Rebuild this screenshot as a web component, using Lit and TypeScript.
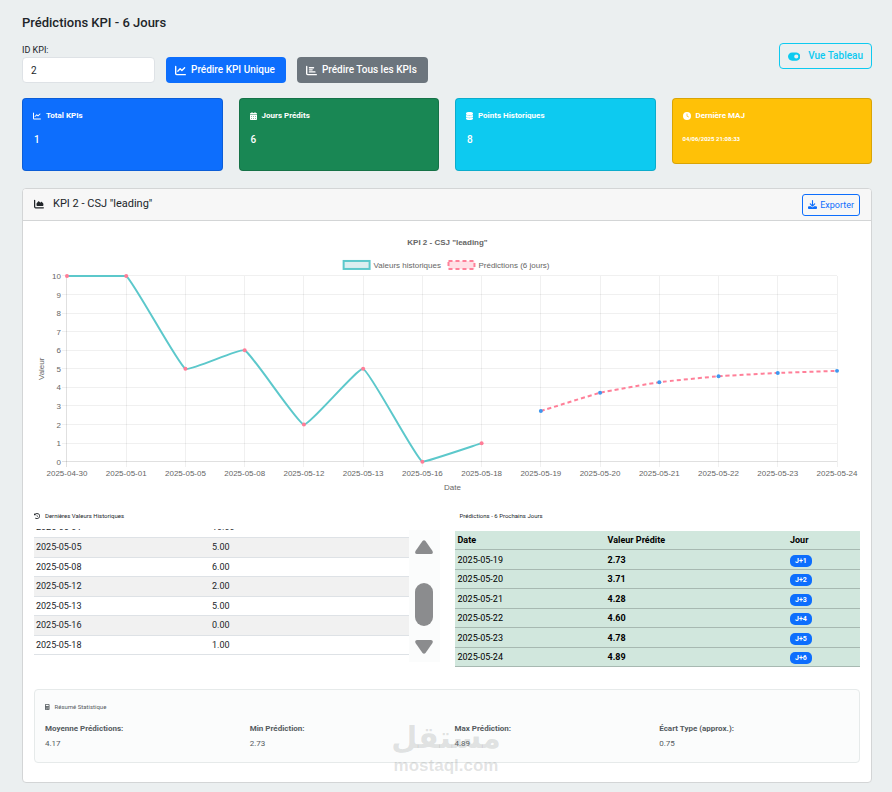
import { LitElement, html, css, svg } from "lit";
import { customElement, property } from "lit/decorators.js";

type Point = { x: number; y: number };

const ICONS: Record<string, { box: string; d: string }> = {
  line: {
    box: "0 0 512 512",
    d: "M64 64c0-17.700-14.300-32-32-32S0 46.300 0 64V400c0 44.200 35.800 80 80 80H480c17.700 0 32-14.300 32-32s-14.300-32-32-32H80c-8.800 0-16-7.200-16-16V64zm406.600 86.600c12.500-12.500 12.500-32.800 0-45.300s-32.800-12.500-45.300 0L320 210.700l-57.400-57.400c-12.500-12.500-32.800-12.500-45.300 0l-112 112c-12.500 12.500-12.500 32.800 0 45.300s32.800 12.500 45.300 0L240 221.300l57.400 57.400c12.500 12.500 32.800 12.500 45.300 0l128-128z",
  },
  bars: {
    box: "0 0 512 512",
    d: "M32 32c17.700 0 32 14.300 32 32V400c0 8.800 7.200 16 16 16H480c17.700 0 32 14.300 32 32s-14.300 32-32 32H80c-44.200 0-80-35.800-80-80V64C0 46.300 14.300 32 32 32zm96 96c0-17.700 14.300-32 32-32l192 0c17.700 0 32 14.300 32 32s-14.300 32-32 32l-192 0c-17.700 0-32-14.300-32-32zm32 64H288c17.700 0 32 14.300 32 32s-14.300 32-32 32H160c-17.700 0-32-14.300-32-32s14.300-32 32-32zm0 96H416c17.700 0 32 14.300 32 32s-14.300 32-32 32H160c-17.700 0-32-14.300-32-32s14.300-32 32-32z",
  },
  calendar: {
    box: "0 0 448 512",
    d: "M128 0c17.700 0 32 14.300 32 32V64H288V32c0-17.700 14.300-32 32-32s32 14.300 32 32V64h48c26.500 0 48 21.500 48 48v48H0V112C0 85.500 21.500 64 48 64H96V32c0-17.700 14.300-32 32-32zM0 192H448V464c0 26.500-21.500 48-48 48H48c-26.500 0-48-21.500-48-48V192zm64 64v32h64v-32H64zm128 0v32h64v-32h-64zm128 0v32h64v-32h-64zM64 392v32h64v-32H64zm128 0v32h64v-32h-64zm128 0v32h64v-32h-64z",
  },
  database: {
    box: "0 0 448 512",
    d: "M448 80v48c0 44.200-100.300 80-224 80S0 172.200 0 128V80C0 35.800 100.300 0 224 0S448 35.800 448 80zM393.200 214.700c20.800-7.400 39.900-16.900 54.800-28.600V288c0 44.200-100.300 80-224 80S0 332.200 0 288V186.100c14.900 11.800 34 21.200 54.800 28.600C99.700 230.700 159.500 240 224 240s124.300-9.300 169.200-25.300zM0 346.100c14.900 11.800 34 21.200 54.800 28.600C99.700 390.700 159.500 400 224 400s124.300-9.300 169.200-25.300c20.800-7.400 39.900-16.900 54.800-28.600V432c0 44.200-100.300 80-224 80S0 476.200 0 432V346.100z",
  },
  clock: {
    box: "0 0 512 512",
    d: "M256 0a256 256 0 1 1 0 512A256 256 0 1 1 256 0zM232 120V256c0 8 4 15.500 10.700 20l96 64c11 7.400 25.900 4.400 33.300-6.700s4.400-25.900-6.700-33.300L280 243.200V120c0-13.300-10.700-24-24-24s-24 10.700-24 24z",
  },
  toggle: {
    box: "0 0 576 512",
    d: "M192 64C86 64 0 150 0 256S86 448 192 448H384c106 0 192-86 192-192s-86-192-192-192H192zm192 96a96 96 0 1 1 0 192 96 96 0 1 1 0-192z",
  },
  area: {
    box: "0 0 512 512",
    d: "M64 64c0-17.700-14.300-32-32-32S0 46.300 0 64V400c0 44.200 35.800 80 80 80H480c17.700 0 32-14.300 32-32s-14.300-32-32-32H80c-8.800 0-16-7.200-16-16V64zm96 288H448c17.700 0 32-14.300 32-32V251.800c0-7.600-2.700-15-7.700-20.800l-65.800-76.800c-12.100-14.200-33.700-15-46.900-1.800l-21 21c-10 10-26.400 9.200-35.400-1.600l-39.200-47c-12.600-15.100-35.700-15.400-48.700-.6L135.900 215c-5.100 5.800-7.900 13.300-7.900 21.100v84c0 17.700 14.300 32 32 32z",
  },
  download: {
    box: "0 0 512 512",
    d: "M288 32c0-17.700-14.300-32-32-32s-32 14.300-32 32V274.700l-73.400-73.400c-12.500-12.500-32.800-12.500-45.300 0s-12.500 32.800 0 45.300l128 128c12.500 12.500 32.800 12.500 45.300 0l128-128c12.500-12.500 12.500-32.800 0-45.300s-32.800-12.500-45.300 0L288 274.700V32zM64 352c-35.300 0-64 28.700-64 64v32c0 35.300 28.700 64 64 64H448c35.300 0 64-28.700 64-64V416c0-35.300-28.700-64-64-64H346.500l-45.300 45.300c-25 25-65.500 25-90.500 0L165.500 352H64z",
  },
  history: {
    box: "0 0 512 512",
    d: "M75 75L41 41C25.900 25.900 0 36.600 0 57.900V168c0 13.300 10.700 24 24 24H134.100c21.400 0 32.100-25.900 17-41l-30.800-30.800C155 85.500 203 64 256 64c106 0 192 86 192 192s-86 192-192 192c-40.800 0-78.600-12.700-109.700-34.400c-14.500-10.100-34.400-6.600-44.600 7.900s-6.600 34.400 7.900 44.600C151.200 495 201.700 512 256 512c141.400 0 256-114.600 256-256S397.400 0 256 0C185.300 0 121.300 28.700 75 75zm181 53c-13.300 0-24 10.700-24 24V256c0 6.400 2.500 12.500 7 17l72 72c9.400 9.400 24.600 9.400 33.900 0s9.400-24.600 0-33.900l-65-65V152c0-13.300-10.700-24-24-24z",
  },
  calculator: {
    box: "0 0 384 512",
    d: "M64 0C28.700 0 0 28.700 0 64V448c0 35.300 28.700 64 64 64H320c35.300 0 64-28.700 64-64V64c0-35.300-28.700-64-64-64H64zM96 64H288c17.700 0 32 14.300 32 32v32c0 17.700-14.300 32-32 32H96c-17.700 0-32-14.300-32-32V96c0-17.700 14.300-32 32-32zM64 224h56v48H64v-48zm100 0h56v48h-56v-48zm100 0h56v48h-56v-48zM64 320h56v48H64v-48zm100 0h56v48h-56v-48zm100 0h56v48h-56v-48zM64 408h156v40H64v-40zm200 0h56v40h-56v-40z",
  },
};

@customElement("kpi-icon")
class KpiIcon extends LitElement {
  @property() name = "line";
  static styles = css`
    :host {
      display: inline-flex;
      flex: none;
      height: 1em;
    }
    svg {
      height: 100%;
      fill: currentColor;
      fill-rule: evenodd;
    }
  `;
  render() {
    const icon = ICONS[this.name];
    return html`<svg viewBox=${icon.box} aria-hidden="true"><path d=${icon.d}></path></svg>`;
  }
}

const HISTORY: [string, number][] = [
  ["2025-04-30", 10],
  ["2025-05-01", 10],
  ["2025-05-05", 5],
  ["2025-05-08", 6],
  ["2025-05-12", 2],
  ["2025-05-13", 5],
  ["2025-05-16", 0],
  ["2025-05-18", 1],
];

const FORECAST: [string, number][] = [
  ["2025-05-19", 2.73],
  ["2025-05-20", 3.71],
  ["2025-05-21", 4.28],
  ["2025-05-22", 4.6],
  ["2025-05-23", 4.78],
  ["2025-05-24", 4.89],
];

const PLOT = { left: 33, right: 804, top: 44, bottom: 230 };
const TENSION = 0.1;

const place = (index: number, value: number): Point => ({
  x: PLOT.left + ((PLOT.right - PLOT.left) * index) / 13,
  y: PLOT.bottom - ((PLOT.bottom - PLOT.top) * value) / 10,
});

/** Cardinal spline whose control points stay inside the plot area. */
function curve(points: Point[]): string {
  const clamp = (y: number) => Math.min(PLOT.bottom, Math.max(PLOT.top, y));
  const handles = points.map((p, i) => {
    const a = points[Math.max(0, i - 1)];
    const b = points[Math.min(points.length - 1, i + 1)];
    const before = Math.hypot(p.x - a.x, p.y - a.y);
    const after = Math.hypot(b.x - p.x, b.y - p.y);
    const total = before + after;
    const kin = (TENSION * before) / total;
    const kout = (TENSION * after) / total;
    return {
      inX: p.x - kin * (b.x - a.x),
      inY: clamp(p.y - kin * (b.y - a.y)),
      outX: p.x + kout * (b.x - a.x),
      outY: clamp(p.y + kout * (b.y - a.y)),
    };
  });
  return points
    .map((p, i) =>
      i === 0
        ? `M${p.x} ${p.y}`
        : `C${handles[i - 1].outX} ${handles[i - 1].outY} ${handles[i].inX} ${handles[i].inY} ${p.x} ${p.y}`
    )
    .join("");
}

@customElement("kpi-chart")
class KpiChart extends LitElement {
  static styles = css`
    :host {
      display: block;
    }
    svg {
      display: block;
      width: 100%;
      font-family: "Liberation Sans", Arial, sans-serif;
      font-size: 8px;
      fill: #666;
    }
    .grid {
      stroke: #000;
      stroke-opacity: 0.06;
      shape-rendering: crispEdges;
    }
    .axis {
      stroke-opacity: 0.12;
    }
    .mid {
      text-anchor: middle;
    }
    .end {
      text-anchor: end;
    }
    .title {
      font-weight: bold;
    }
    .past {
      fill: none;
      stroke: #5cc8cb;
      stroke-width: 2;
    }
    .next {
      fill: none;
      stroke: #ff8099;
      stroke-width: 2;
      stroke-dasharray: 4 3;
    }
    .key-past {
      fill: #dbeef0;
      stroke: #5cc8cb;
      stroke-width: 2;
    }
    .key-next {
      fill: #ffe0e6;
      stroke: #ff8099;
      stroke-width: 2;
      stroke-dasharray: 4 3;
    }
    .dot-past {
      fill: #ff7d97;
    }
    .dot-next {
      fill: #3f97ee;
    }
  `;
  render() {
    const past = HISTORY.map(([, v], i) => place(i, v));
    const next = FORECAST.map(([, v], i) => place(i + HISTORY.length, v));
    const labels = [...HISTORY, ...FORECAST].map(([date]) => date);
    return html`<svg viewBox="0 0 827 263" role="img" aria-label="KPI 2">
      <text class="mid title" x="414" y="13">KPI 2 - CSJ "leading"</text>
      <rect class="key-past" x="310" y="29" width="26" height="8"></rect>
      <text x="340" y="36">Valeurs historiques</text>
      <rect class="key-next" x="415" y="29" width="26" height="8"></rect>
      <text x="445" y="36">Prédictions (6 jours)</text>
      ${labels.map((label, i) => {
        const { x } = place(i, 0);
        return svg`<line class="grid ${i ? "" : "axis"}" x1=${x} x2=${x} y1=${PLOT.top} y2=${PLOT.bottom + 5}></line>
          <text class="mid" x=${x} y="244">${label}</text>`;
      })}
      ${Array.from({ length: 11 }, (_, v) => {
        const { y } = place(0, v);
        return svg`<line class="grid ${v ? "" : "axis"}" x1=${PLOT.left - 5} x2=${PLOT.right} y1=${y} y2=${y}></line>
          <text class="end" x="27" y=${y + 3}>${v}</text>`;
      })}
      <text class="mid" transform="translate(10 137) rotate(-90)">Valeur</text>
      <text class="mid" x="419" y="258">Date</text>
      <path class="past" d=${curve(past)}></path>
      <path class="next" d=${curve(next)}></path>
      ${past.map((p) => svg`<circle class="dot-past" cx=${p.x} cy=${p.y} r="2"></circle>`)}
      ${next.map((p) => svg`<circle class="dot-next" cx=${p.x} cy=${p.y} r="2"></circle>`)}
    </svg>`;
  }
}

@customElement("app-root")
class AppRoot extends LitElement {
  static styles = css`
    :host {
      display: block;
      box-sizing: border-box;
      min-height: 100vh;
      padding: 15px 20px 9px 22px;
      background: #ebeff0;
      color: #212529;
      font: 10px/12px Roboto, "Open Sans", sans-serif;
      position: relative;
    }
    *,
    *::before {
      box-sizing: border-box;
    }
    h1,
    h2,
    h3,
    p {
      margin: 0;
      font-weight: 400;
    }
    h1 {
      font-size: 13px;
      line-height: 16px;
      font-weight: 500;
    }
    button,
    input {
      font: inherit;
    }
    .toolbar {
      display: flex;
      justify-content: space-between;
      align-items: flex-start;
      margin-top: 12px;
    }
    .controls {
      display: flex;
      align-items: flex-end;
      gap: 11px;
    }
    .field {
      display: flex;
      flex-direction: column;
      gap: 1px;
      width: 133px;
      padding-top: 1px;
      font-size: 9px;
    }
    .field input {
      width: 100%;
      height: 26px;
      padding: 0 8px;
      border: 1px solid #dee2e6;
      border-radius: 4px;
      background: #fff;
      color: #212529;
      font-size: 10px;
    }
    .btn {
      display: flex;
      align-items: center;
      gap: 5px;
      height: 26px;
      padding: 0 10px 0 8px;
      border: 1px solid transparent;
      border-radius: 4px;
      color: #fff;
      font-weight: 500;
      white-space: nowrap;
    }
    .btn kpi-icon {
      height: 11px;
    }
    .primary {
      background: #0d6efd;
    }
    .secondary {
      background: #6c757d;
    }
    .info {
      gap: 8px;
      padding: 0 8px;
      background: none;
      border-color: #0dcaf0;
      color: #0dcaf0;
    }
    .export {
      gap: 3px;
      height: 22px;
      padding: 0 5px;
      background: none;
      border-color: #0d6efd;
      border-radius: 3px;
      color: #0d6efd;
      font-size: 9px;
      font-weight: 400;
    }
    .export kpi-icon {
      height: 9px;
    }
    .stats {
      display: grid;
      grid-template-columns: repeat(4, 1fr);
      align-items: start;
      gap: 16px;
      margin-top: 15px;
    }
    .stat {
      padding: 11px 10px;
      height: 73px;
      border: 1px solid rgba(0, 0, 0, 0.15);
      border-radius: 4px;
      color: #fff;
      font-weight: 500;
    }
    .stat h2 {
      display: flex;
      align-items: center;
      gap: 5px;
      font-size: 8px;
      font-weight: 700;
    }
    .stat p {
      margin-top: 12px;
      padding-left: 1px;
      font-weight: 500;
    }
    .blue {
      background: #0d6efd;
    }
    .green {
      background: #198754;
    }
    .cyan {
      background: #0dcaf0;
    }
    .amber {
      height: 66px;
      background: #ffc107;
    }
    .stat .stamp {
      margin-top: 11px;
      padding-left: 0;
      font-size: 6px;
      font-weight: 700;
    }
    .card {
      margin-top: 17px;
      border: 1px solid #d3d5d6;
      border-radius: 4px;
      background: #fff;
      overflow: hidden;
    }
    .card-head {
      display: flex;
      align-items: center;
      justify-content: space-between;
      height: 32px;
      padding: 0 11px;
      border-bottom: 1px solid #d3d5d6;
      background: #f7f7f7;
    }
    .card-title {
      display: flex;
      align-items: center;
      gap: 9px;
      padding-bottom: 2px;
      font-size: 11px;
    }
    .card-title kpi-icon {
      height: 10px;
    }
    .card-body {
      padding: 11px 11px 19px;
    }
    .tables {
      display: grid;
      grid-template-columns: 1fr 1fr;
      gap: 15px;
      margin-top: 17px;
    }
    .caption {
      display: flex;
      align-items: center;
      gap: 5px;
      height: 8px;
      font-size: 6px;
      line-height: 8px;
    }
    .caption.inset {
      padding-left: 5px;
    }
    table {
      width: 100%;
      border-collapse: collapse;
      table-layout: fixed;
      font-size: 9px;
      line-height: 12px;
    }
    th,
    td {
      height: 19px;
      padding: 0 2px;
      border-bottom: 1px solid #dee2e6;
      text-align: left;
    }
    .long td {
      height: 20px;
    }
    .scroll {
      display: flex;
      height: 133px;
      margin-top: 9px;
    }
    .viewport {
      display: flex;
      flex: 1;
      flex-direction: column;
      justify-content: flex-end;
      padding-bottom: 7px;
      overflow: hidden;
    }
    .past .date {
      width: 47%;
    }
    .past .long {
      background: #f1f1f1;
    }
    .bar {
      display: flex;
      flex-direction: column;
      align-items: center;
      width: 31px;
      margin-top: 1px;
      padding: 10px 0 0;
      background: #fbfcfc;
    }
    .bar svg {
      width: 18px;
      fill: #8b8c8e;
    }
    .thumb {
      width: 18px;
      height: 43px;
      margin: 29px 0 14px;
      border-radius: 9px;
      background: #8b8c8e;
    }
    .next {
      margin-top: 11px;
      background: #d1e7dd;
      color: #000;
    }
    .next th,
    .next td {
      padding-left: 3px;
      border-color: #a7b9b1;
    }
    .next .date {
      width: 37%;
    }
    .next .value {
      width: 45%;
    }
    .next td.value {
      font-weight: 700;
    }
    .badge {
      display: block;
      width: 22px;
      margin-top: 2px;
      border-radius: 5px;
      background: #0d6efd;
      color: #fff;
      font-size: 7px;
      font-weight: 700;
      text-align: center;
    }
    .summary {
      height: 74px;
      margin-top: 22px;
      padding: 13px 10px;
      border: 1px solid #e6eaea;
      border-radius: 4px;
      background: #fbfcfc;
      color: #555b5f;
    }
    .figures {
      display: grid;
      grid-template-columns: repeat(4, 1fr);
      gap: 15px;
      margin: 12px 0 0;
      font-size: 8px;
    }
    dt {
      font-weight: 700;
    }
    dd {
      margin: 3px 0 0;
    }
    .watermark {
      position: absolute;
      left: 50%;
      bottom: 16px;
      transform: translateX(-50%);
      color: rgba(110, 115, 115, 0.2);
      font: bold 17px/20px "Liberation Sans", Arial, sans-serif;
      text-align: center;
      pointer-events: none;
    }
    .brand {
      display: block;
      font: bold 30px/36px "DejaVu Sans", sans-serif;
    }
  `;

  render() {
    return html`
      <h1>Prédictions KPI - 6 Jours</h1>
      <div class="toolbar">
        <div class="controls">
          <label class="field">ID KPI:<input type="text" inputmode="numeric" .value=${"2"} /></label>
          <button class="btn primary"><kpi-icon name="line"></kpi-icon>Prédire KPI Unique</button>
          <button class="btn secondary"><kpi-icon name="bars"></kpi-icon>Prédire Tous les KPIs</button>
        </div>
        <button class="btn info"><kpi-icon name="toggle"></kpi-icon>Vue Tableau</button>
      </div>

      <section class="stats">
        <div class="stat blue"><h2><kpi-icon name="line"></kpi-icon>Total KPIs</h2><p>1</p></div>
        <div class="stat green"><h2><kpi-icon name="calendar"></kpi-icon>Jours Prédits</h2><p>6</p></div>
        <div class="stat cyan"><h2><kpi-icon name="database"></kpi-icon>Points Historiques</h2><p>8</p></div>
        <div class="stat amber">
          <h2><kpi-icon name="clock"></kpi-icon>Dernière MAJ</h2>
          <p class="stamp">04/06/2025 21:08:33</p>
        </div>
      </section>

      <section class="card">
        <header class="card-head">
          <h2 class="card-title"><kpi-icon name="area"></kpi-icon>KPI 2 - CSJ "leading"</h2>
          <button class="btn export"><kpi-icon name="download"></kpi-icon>Exporter</button>
        </header>
        <div class="card-body">
          <kpi-chart></kpi-chart>
          <div class="tables">
            <section>
              <h3 class="caption"><kpi-icon name="history"></kpi-icon>Dernières Valeurs Historiques</h3>
              <div class="scroll">
                <div class="viewport">
                  <table class="past">
                    <tbody>
                      ${HISTORY.slice(1).map(
                        ([date, value], i) => html`<tr class=${i % 2 ? "long" : ""}>
                          <td class="date">${date}</td>
                          <td>${value.toFixed(2)}</td>
                        </tr>`
                      )}
                    </tbody>
                  </table>
                </div>
                <div class="bar">
                  <svg viewBox="0 0 18 14"><path d="M7.500 1Q9-.6 10.500 1L17.500 11Q18.500 14 16 14H2Q-.5 14 .5 11Z"></path></svg>
                  <div class="thumb"></div>
                  <svg viewBox="0 0 18 14"><path d="M7.500 13Q9 14.600 10.500 13L17.500 3Q18.500 0 16 0H2Q-.5 0 .5 3Z"></path></svg>
                </div>
              </div>
            </section>
            <section>
              <h3 class="caption inset">Prédictions - 6 Prochains Jours</h3>
              <table class="next">
                <thead>
                  <tr>
                    <th class="date">Date</th>
                    <th class="value">Valeur Prédite</th>
                    <th>Jour</th>
                  </tr>
                </thead>
                <tbody>
                  ${FORECAST.map(
                    ([date, value], i) => html`<tr class=${i % 2 ? "" : "long"}>
                      <td>${date}</td>
                      <td class="value">${value.toFixed(2)}</td>
                      <td><span class="badge">J+${i + 1}</span></td>
                    </tr>`
                  )}
                </tbody>
              </table>
            </section>
          </div>
          <section class="summary">
            <h3 class="caption"><kpi-icon name="calculator"></kpi-icon>Résumé Statistique</h3>
            <dl class="figures">
              <div><dt>Moyenne Prédictions:</dt><dd>4.17</dd></div>
              <div><dt>Min Prédiction:</dt><dd>2.73</dd></div>
              <div><dt>Max Prédiction:</dt><dd>4.89</dd></div>
              <div><dt>Écart Type (approx.):</dt><dd>0.75</dd></div>
            </dl>
          </section>
        </div>
      </section>
      <div class="watermark"><span class="brand" lang="ar" dir="rtl">مستقل</span>mostaql.com</div>
    `;
  }
}
